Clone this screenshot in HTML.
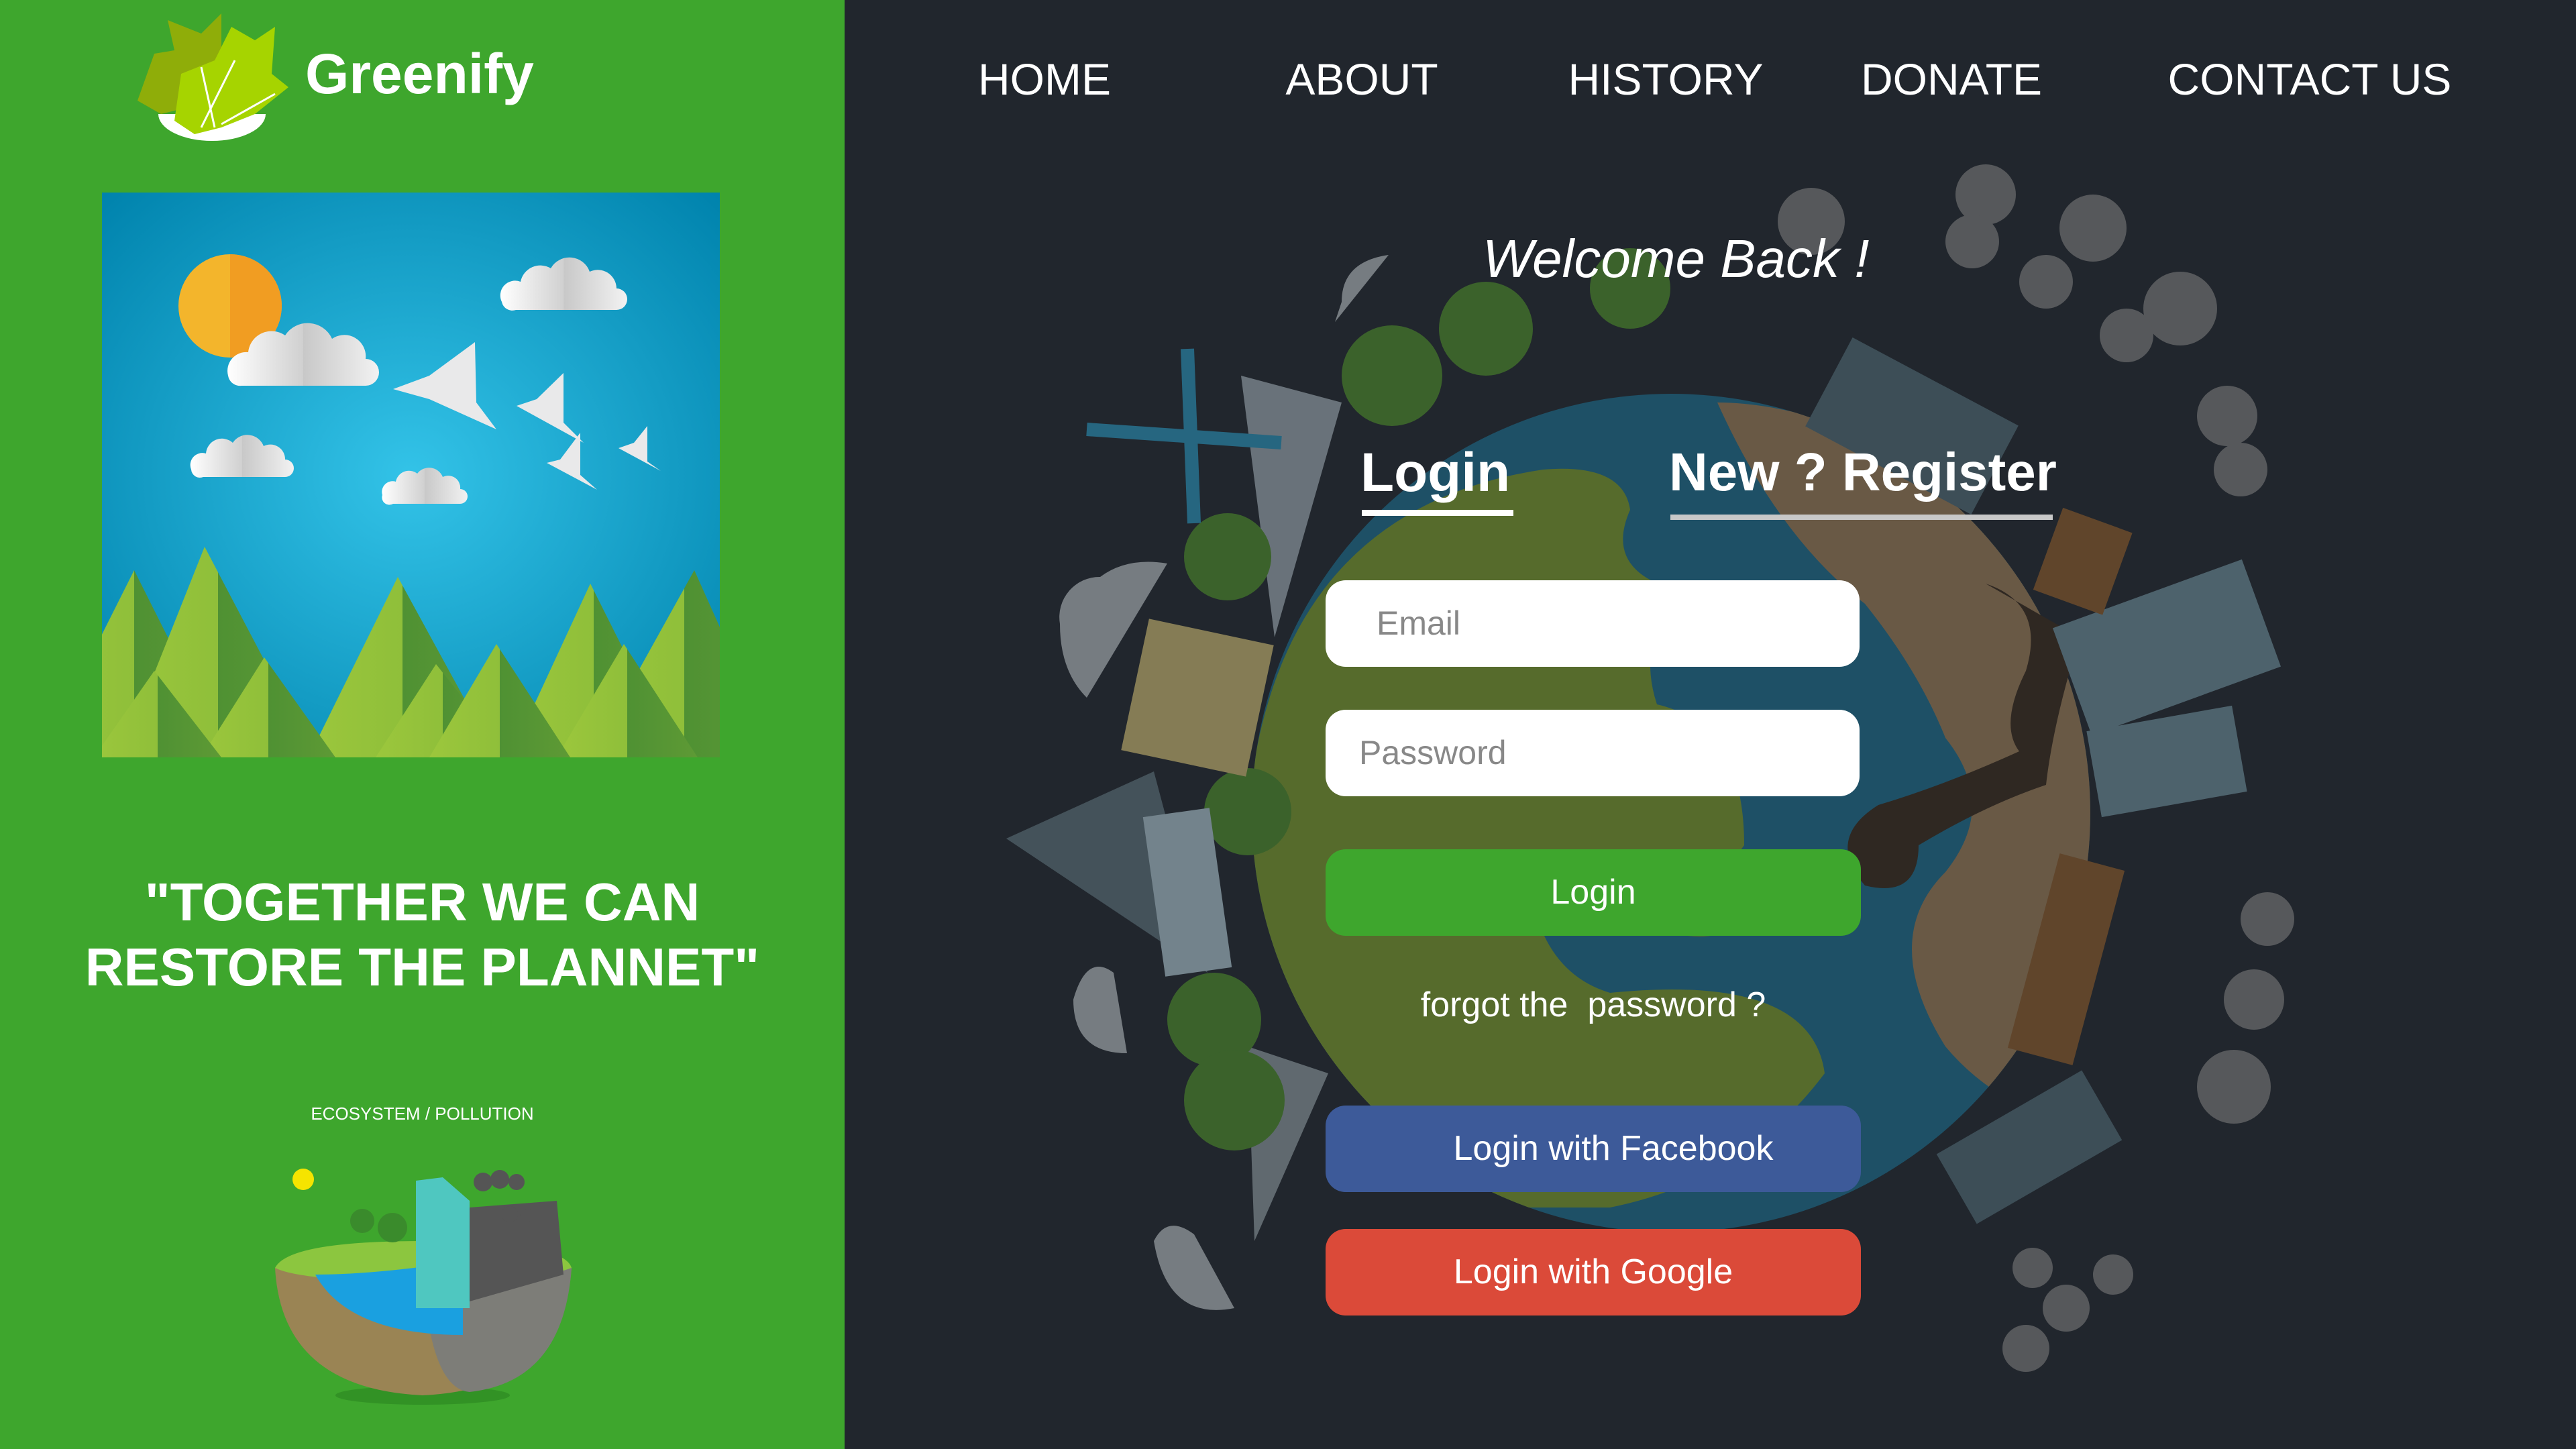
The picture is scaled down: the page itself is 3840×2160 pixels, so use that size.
<!DOCTYPE html>
<html><head><meta charset="utf-8">
<style>
*{margin:0;padding:0;box-sizing:border-box}
body{width:3840px;height:2160px;overflow:hidden;background:#21262d;font-family:"Liberation Sans",sans-serif;position:relative}
.abs{position:absolute}
#left{left:0;top:0;width:1259px;height:2160px;background:#3ea62d}
.nav{top:80px;font-size:66px;color:#fff;transform:translateX(-50%);white-space:nowrap}
.inp{background:#fff;border-radius:30px;left:1976px;width:796px;height:129px;font-size:50px;color:#888;line-height:129px}
.btn{left:1976px;width:798px;height:129px;border-radius:30px;color:#fff;font-size:52px;text-align:center;line-height:129px}
</style></head><body>
<div id="left" class="abs"></div>

<svg class="abs" style="left:0;top:0" width="3840" height="2160" viewBox="0 0 3840 2160">
<defs>
<radialGradient id="sky" cx="0.5" cy="0.5" r="0.7"><stop offset="0" stop-color="#33c3e8"/><stop offset="1" stop-color="#0083ad"/></radialGradient>
<linearGradient id="tree" x1="0" x2="1"><stop offset="0" stop-color="#9cc73c"/><stop offset="0.5" stop-color="#8fbf3a"/><stop offset="0.5" stop-color="#4f9133"/><stop offset="1" stop-color="#5e9a35"/></linearGradient>
<linearGradient id="cloud" x1="0" x2="1"><stop offset="0" stop-color="#fff"/><stop offset="0.5" stop-color="#d0d0d0"/><stop offset="0.5" stop-color="#c8c8c8"/><stop offset="1" stop-color="#f2f2f2"/></linearGradient>
<clipPath id="box"><rect x="152" y="287" width="921" height="842"/></clipPath>
<clipPath id="globe"><circle cx="2491" cy="1212" r="625"/></clipPath>
</defs>

<g clip-path="url(#box)">
<rect x="152" y="287" width="921" height="842" fill="url(#sky)"/>
<circle cx="343" cy="456" r="77" fill="#f3b52c"/>
<path d="M343 379 A77 77 0 0 1 343 533 Z" fill="#f19d22"/>
<g fill="url(#cloud)">
<path d="M340 560 a28 28 0 0 1 30-35 a35 35 0 0 1 55-25 a40 40 0 0 1 70 5 a32 32 0 0 1 50 30 a20 20 0 0 1 0 40 h-185 a18 18 0 0 1 -20-15z"/>
<path d="M748 450 a22 22 0 0 1 28-30 a30 30 0 0 1 45-20 a32 32 0 0 1 58 5 a28 28 0 0 1 40 25 a16 16 0 0 1 0 32 h-150 a16 16 0 0 1 -21-12z"/>
<path d="M285 700 a18 18 0 0 1 22-24 a24 24 0 0 1 40-16 a26 26 0 0 1 46 5 a22 22 0 0 1 32 20 a13 13 0 0 1 0 26 h-122 a13 13 0 0 1 -18-11z"/>
<path d="M570 738 a16 16 0 0 1 20-20 a20 20 0 0 1 32-12 a22 22 0 0 1 38 5 a18 18 0 0 1 26 18 a11 11 0 0 1 0 22 h-100 a11 11 0 0 1 -16-13z"/>
</g>
<g fill="#e9e9ea">
<polygon points="586,580 640,560 708,510 710,600 740,640 640,595"/>
<polygon points="770,605 800,595 840,556 840,630 870,660"/>
<polygon points="815,690 835,685 865,645 865,708 890,730"/>
<polygon points="922,668 945,660 965,635 965,688 985,702"/>
</g>
<g fill="url(#tree)">
<polygon points="60,1129 200,850 340,1129"/>
<polygon points="180,1129 305,815 470,1129"/>
<polygon points="460,1129 593,860 740,1129"/>
<polygon points="760,1129 880,870 1010,1129"/>
<polygon points="880,1129 1035,850 1160,1129"/>
<polygon points="300,1129 394,980 500,1129"/>
<polygon points="560,1129 650,990 760,1129"/>
<polygon points="830,1129 930,960 1040,1129"/>
<polygon points="140,1129 230,1000 330,1129"/>
<polygon points="640,1129 740,960 850,1129"/>
</g>
</g>

<path d="M236 170 a80 40 0 0 0 160 0 z" fill="#fff"/>
<path d="M205 150 L230 80 L260 75 L250 30 L300 50 L330 20 L330 90 L360 130 L320 170 L280 160 L240 170Z" fill="#8fad09"/>
<path d="M260 180 L270 110 L320 90 L345 40 L380 60 L410 40 L405 110 L430 130 L380 170 L330 190 L290 200Z" fill="#a6d400"/>
<path d="M300 190 L350 90 M330 185 L410 140 M320 190 L300 100" stroke="#fff" stroke-width="3"/>

<ellipse cx="630" cy="2080" rx="130" ry="14" fill="#2e8a22" opacity="0.7"/>
<path d="M410 1890 Q420 2070 630 2080 Q840 2070 852 1890 Z" fill="#9a8454"/>
<path d="M630 1890 Q640 2070 700 2075 Q840 2060 852 1890 Z" fill="#7d7d78"/>
<path d="M410 1890 Q430 1850 630 1850 Q840 1850 852 1890 Q800 1910 630 1910 Q450 1910 410 1890Z" fill="#8cc63f"/>
<path d="M470 1900 Q520 1990 690 1990 L690 1880 Q560 1900 470 1900Z" fill="#1aa0e0"/>
<path d="M620 1760 L660 1755 L700 1790 L700 1950 L620 1950Z" fill="#4fc7c0"/>
<path d="M700 1800 L830 1790 L840 1900 L700 1940Z" fill="#555"/>
<circle cx="452" cy="1758" r="16" fill="#f5e400"/>
<g fill="#555"><circle cx="720" cy="1762" r="14"/><circle cx="745" cy="1758" r="14"/><circle cx="770" cy="1762" r="12"/><circle cx="760" cy="1810" r="12"/><circle cx="785" cy="1812" r="10"/></g>
<g fill="#3a8b2c"><circle cx="540" cy="1820" r="18"/><circle cx="585" cy="1830" r="22"/></g>

<g opacity="0.6">
<circle cx="2491" cy="1212" r="625" fill="#1d6d8c"/>
<g clip-path="url(#globe)">
<path d="M1860 1212 Q1900 760 2300 700 Q2420 690 2430 760 Q2390 850 2500 880 Q2440 960 2470 1050 Q2600 1080 2600 1260 Q2560 1320 2420 1300 Q2320 1250 2280 1320 Q2300 1450 2400 1480 Q2700 1450 2720 1600 Q2600 1760 2400 1800 L2000 1800 Q1860 1500 1860 1212Z" fill="#7a9a2c"/>
<path d="M2560 600 Q2700 600 2900 700 L3200 900 L3200 1700 Q3000 1680 2900 1560 Q2800 1400 2900 1300 Q2980 1200 2900 1100 Q2860 1000 2780 900 Q2650 800 2560 600Z" fill="#9a7c56"/>
<path d="M2460 1270 Q2600 1250 2620 1360 Q2560 1420 2460 1380Z" fill="#7a9a2c"/>
</g>
<path d="M2960 870 Q3050 900 3020 1000 Q2980 1080 3010 1120 Q2900 1170 2800 1200 Q2720 1250 2780 1320 Q2860 1340 2860 1260 Q2960 1200 3050 1170 Q3060 1080 3100 950 Z" fill="#3a2a1c"/>
<polygon points="1850,560 2000,600 1900,950" fill="#9aa6ad"/>
<polygon points="1500,1250 1720,1150 1800,1450" fill="#5d7078"/>
<polygon points="1860,1560 1980,1600 1870,1850" fill="#8a969c"/>
<path d="M1580 930 a60 60 0 0 1 60-70 q40-30 100-20 l-120 200 q-40-40 -40-110Z" fill="#b0b6ba"/>
<path d="M2000 450 q0-60 70-70 l-80 100Z" fill="#b0b6ba"/>
<path d="M1600 1490 q20-70 60-40 l20 120 q-80 0 -80-80Z" fill="#b0b6ba"/>
<path d="M1720 1850 q20-40 60-10 l60 110 q-100 20 -120-100Z" fill="#b0b6ba"/>
<g fill="#4d8a2b"><circle cx="2215" cy="490" r="70"/><circle cx="2075" cy="560" r="75"/><circle cx="1830" cy="830" r="65"/><circle cx="1860" cy="1210" r="65"/><circle cx="1810" cy="1520" r="70"/><circle cx="1840" cy="1640" r="75"/><circle cx="2430" cy="430" r="60"/></g>
<rect x="1690" y="940" width="190" height="200" fill="#c8b670" transform="rotate(12 1785 1040)"/>
<rect x="1720" y="1210" width="100" height="240" fill="#aac2cc" transform="rotate(-8 1770 1330)"/>
<path d="M1770 520 L1780 780 M1620 640 L1910 660" stroke="#2a92b8" stroke-width="20"/>
<rect x="3080" y="880" width="300" height="170" fill="#6c8a96" transform="rotate(-20 3230 965)"/>
<rect x="3120" y="1070" width="220" height="130" fill="#6c8a96" transform="rotate(-10 3230 1135)"/>
<rect x="2710" y="560" width="280" height="150" fill="#506a74" transform="rotate(28 2850 635)"/>
<rect x="3030" y="1280" width="100" height="300" fill="#8a5a2a" transform="rotate(15 3080 1430)"/>
<rect x="2900" y="1650" width="250" height="120" fill="#506a74" transform="rotate(-30 3025 1710)"/>
<rect x="3050" y="770" width="110" height="130" fill="#8a5a2a" transform="rotate(20 3100 835)"/>
<g fill="#7a7a7a">
<circle cx="2960" cy="290" r="45"/><circle cx="2940" cy="360" r="40"/><circle cx="3120" cy="340" r="50"/><circle cx="3050" cy="420" r="40"/><circle cx="3250" cy="460" r="55"/><circle cx="3170" cy="500" r="40"/><circle cx="3320" cy="620" r="45"/><circle cx="3340" cy="700" r="40"/><circle cx="3380" cy="1370" r="40"/><circle cx="3360" cy="1490" r="45"/><circle cx="3330" cy="1620" r="55"/><circle cx="3030" cy="1890" r="30"/><circle cx="3080" cy="1950" r="35"/><circle cx="3020" cy="2010" r="35"/><circle cx="3150" cy="1900" r="30"/><circle cx="2700" cy="330" r="50"/>
</g>
</g>
</svg>

<div class="abs" style="left:455px;top:62px;font-size:84px;font-weight:bold;color:#fff">Greenify</div>
<div class="abs" style="left:0;width:1259px;top:1296px;text-align:center;font-size:80px;font-weight:bold;color:#fff;line-height:97px">"TOGETHER WE CAN<br>RESTORE THE PLANNET"</div>
<div class="abs" style="left:0;width:1259px;top:1645px;text-align:center;font-size:26px;color:#fff">ECOSYSTEM / POLLUTION</div>

<div class="abs nav" style="left:1557px">HOME</div>
<div class="abs nav" style="left:2030px">ABOUT</div>
<div class="abs nav" style="left:2483px">HISTORY</div>
<div class="abs nav" style="left:2909px">DONATE</div>
<div class="abs nav" style="left:3443px">CONTACT US</div>

<div class="abs" style="left:2210px;top:340px;font-size:80px;font-style:italic;color:#fff">Welcome Back !</div>
<div class="abs" style="left:2028px;top:658px;font-size:82px;font-weight:bold;color:#fff">Login</div>
<div class="abs" style="left:2030px;top:760px;width:226px;height:9px;background:#fff"></div>
<div class="abs" style="left:2488px;top:658px;font-size:80px;font-weight:bold;color:#fff;white-space:nowrap">New ? Register</div>
<div class="abs" style="left:2490px;top:767px;width:570px;height:8px;background:#c8c8c8"></div>

<div class="abs inp" style="top:865px;padding-left:76px">Email</div>
<div class="abs inp" style="top:1058px;padding-left:50px">Password</div>
<div class="abs btn" style="top:1266px;background:#3ea62d">Login</div>
<div class="abs" style="left:1976px;width:798px;top:1468px;text-align:center;font-size:52px;color:#fff">forgot the&nbsp; password ?</div>
<div class="abs btn" style="top:1648px;background:#3d5a99;padding-left:60px">Login with Facebook</div>
<div class="abs btn" style="top:1832px;background:#db4a39">Login with Google</div>
</body></html>
